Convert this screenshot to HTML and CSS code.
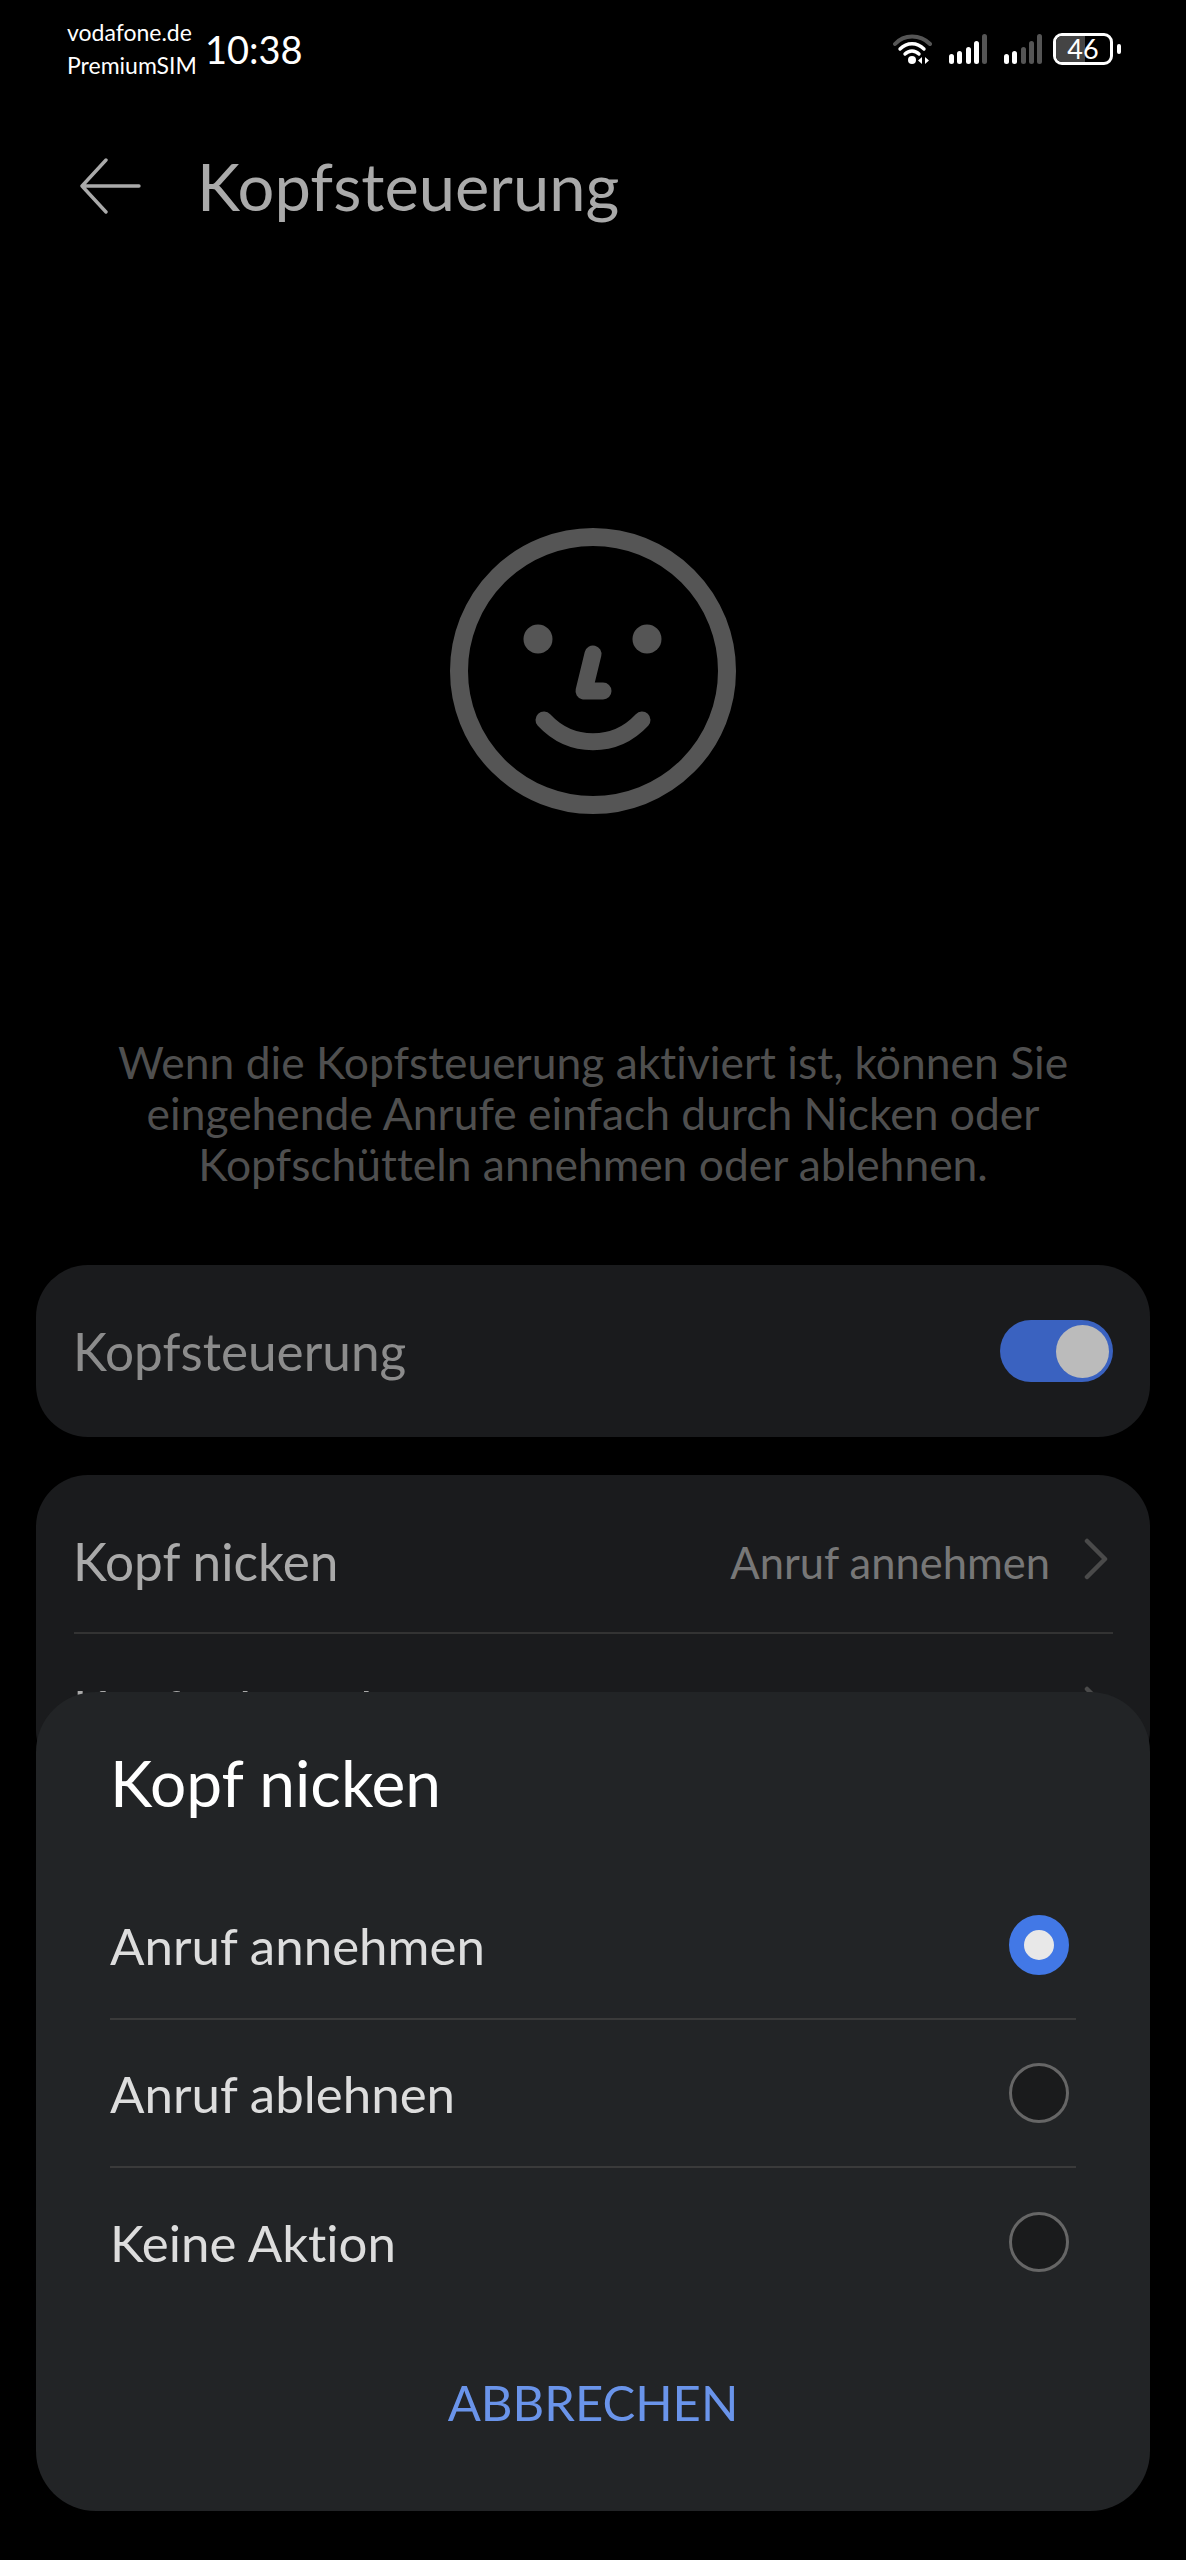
FILE: index.html
```html
<!DOCTYPE html>
<html lang="de">

<head>
    <meta charset="UTF-8">
    <title>Kopfsteuerung</title>
    <link rel="stylesheet" href="styles.css">
</head>

<body>
    <div class="screen">
        <div class="status-bar">
            <div class="carrier">
                <div>vodafone.de</div>
                <div>PremiumSIM</div>
            </div>
            <div class="clock">10:38</div>
            <div class="status-icons">
                <svg class="wifi" width="40" height="32" viewBox="0 0 40 32">
                    <path d="M2 11C11 1 27 1 37 11" fill="none" stroke="#555" stroke-width="4" stroke-linecap="round"/>
                    <path d="M7 16C14 9 24 9 31 16" fill="none" stroke="#fff" stroke-width="3.4" stroke-linecap="round"/>
                    <path d="M12 21C16 17 22 17 26 21" fill="none" stroke="#fff" stroke-width="3.4" stroke-linecap="round"/>
                    <circle cx="19" cy="27" r="4" fill="#fff"/>
                    <path d="M29 24v7l-4-3.5zM32 24v7l4-3.5z" fill="#fff"/>
                </svg>
                <svg class="signal" width="39" height="32" viewBox="0 0 39 32">
                    <rect x="0" y="21" width="5" height="10" rx="2.5" fill="#fff"/>
                    <rect x="8" y="18" width="5" height="13" rx="2.5" fill="#fff"/>
                    <rect x="17" y="14" width="5" height="17" rx="2.5" fill="#fff"/>
                    <rect x="25" y="8" width="5" height="23" rx="2.5" fill="#fff"/>
                    <rect x="33" y="1" width="5" height="30" rx="2.5" fill="#555"/>
                </svg>
                <svg class="signal" width="39" height="32" viewBox="0 0 39 32">
                    <rect x="0" y="21" width="5" height="10" rx="2.5" fill="#fff"/>
                    <rect x="8" y="18" width="5" height="13" rx="2.5" fill="#fff"/>
                    <rect x="17" y="14" width="5" height="17" rx="2.5" fill="#555"/>
                    <rect x="25" y="8" width="5" height="23" rx="2.5" fill="#555"/>
                    <rect x="33" y="1" width="5" height="30" rx="2.5" fill="#555"/>
                </svg>
                <div class="battery"><span class="battery-level"></span><span class="battery-text">46</span></div>
                <span class="battery-cap"></span>
            </div>
        </div>

        <div class="title-bar">
            <svg class="back" width="62" height="56" viewBox="0 0 62 56">
                <path d="M60 28H3M27 2L3 28l24 26" fill="none" stroke="#aaa" stroke-width="3.4" stroke-linecap="round" stroke-linejoin="round"/>
            </svg>
            <h1>Kopfsteuerung</h1>
        </div>

        <div class="face">
            <svg width="288" height="288" viewBox="0 0 288 288">
                <circle cx="144" cy="144" r="134" fill="none" stroke="#555" stroke-width="18"/>
                <circle cx="89" cy="112" r="14.5" fill="#555"/>
                <circle cx="198" cy="112" r="14.5" fill="#555"/>
                <path d="M144 127L135 164H154" fill="none" stroke="#555" stroke-width="17" stroke-linecap="round" stroke-linejoin="round"/>
                <path d="M95 193C122 222 166 222 193 193" fill="none" stroke="#555" stroke-width="17" stroke-linecap="round"/>
            </svg>
        </div>

        <p class="intro">Wenn die Kopfsteuerung aktiviert ist, können Sie eingehende Anrufe einfach durch Nicken oder Kopfschütteln annehmen oder ablehnen.</p>

        <div class="card switch-card">
            <span class="switch-label">Kopfsteuerung</span>
            <div class="toggle"><span class="knob"></span></div>
        </div>

        <div class="card list-card">
            <div class="list-row">
                <span class="row-label">Kopf nicken</span>
                <span class="row-value">Anruf annehmen</span>
                <svg class="chevron" width="24" height="42" viewBox="0 0 24 42"><path d="M3 3l18 18L3 39" fill="none" stroke="#4a4a4a" stroke-width="4.5" stroke-linecap="round" stroke-linejoin="round"/></svg>
            </div>
            <div class="list-row">
                <span class="row-label">Kopf schütteln</span>
                <span class="row-value">Anruf ablehnen</span>
                <svg class="chevron" width="24" height="42" viewBox="0 0 24 42"><path d="M3 3l18 18L3 39" fill="none" stroke="#4a4a4a" stroke-width="4.5" stroke-linecap="round" stroke-linejoin="round"/></svg>
            </div>
        </div>

        <div class="sheet">
            <h2>Kopf nicken</h2>
            <div class="option">
                <span>Anruf annehmen</span>
                <span class="radio radio-on"></span>
            </div>
            <div class="option">
                <span>Anruf ablehnen</span>
                <span class="radio"></span>
            </div>
            <div class="option">
                <span>Keine Aktion</span>
                <span class="radio"></span>
            </div>
            <div class="cancel">ABBRECHEN</div>
        </div>
    </div>
</body>
</html>
```

FILE: styles.css
```css
* {
    box-sizing: border-box;
}

body {
    margin: 0;
    background-color: #000;
    font-family: 'Lato', 'Noto Sans', sans-serif;
    font-variant-ligatures: none;
}

.screen {
    position: relative;
    width: 1186px;
    height: 2560px;
    overflow: hidden;
    background-color: #000;
}

/* status bar */
.status-bar {
    display: flex;
    align-items: center;
    height: 98px;
    padding: 0 65px 0 67px;
    color: #fff;
}

.carrier {
    font-size: 23px;
    line-height: 33px;
}

.clock {
    margin-left: 8px;
    font-size: 38px;
}

.status-icons {
    display: flex;
    align-items: center;
    gap: 16px;
    margin-left: auto;
}

.battery {
    position: relative;
    width: 60px;
    height: 32px;
    margin-left: -6px;
    border: 3px solid #fff;
    border-radius: 9px;
    text-align: center;
    font-size: 27px;
    line-height: 26px;
}

.battery-level {
    position: absolute;
    left: 0;
    top: 0;
    bottom: 0;
    width: 54%;
    border-radius: 6px 0 0 6px;
    background-color: #444;
}

.battery-text {
    position: relative;
}

.battery-cap {
    width: 4px;
    height: 10px;
    margin-left: -12px;
    border-radius: 2px;
    background-color: #fff;
}

/* title */
.title-bar {
    display: flex;
    align-items: center;
    height: 92px;
    padding-left: 79px;
    margin-top: 42px;
}

.title-bar h1 {
    margin: 0 0 0 56px;
    font-size: 65px;
    font-weight: 400;
    color: #aaa;
}

.face {
    display: flex;
    justify-content: center;
    margin-top: 295px;
}

.intro {
    margin: 221px 100px 0;
    font-size: 44.4px;
    line-height: 51px;
    text-align: center;
    color: #4f4f4f;
}

/* cards */
.card {
    margin: 0 36px;
    border-radius: 52px;
    background-color: #1a1b1d;
}

.switch-card {
    display: flex;
    align-items: center;
    justify-content: space-between;
    height: 172px;
    margin-top: 76px;
    padding: 0 37px;
}

.switch-label {
    font-size: 51.3px;
    color: #8c8c8c;
}

.toggle {
    display: flex;
    justify-content: flex-end;
    align-items: center;
    width: 113px;
    height: 62px;
    padding-right: 4px;
    border-radius: 31px;
    background-color: #3a62c0;
}

.knob {
    width: 53px;
    height: 53px;
    border-radius: 50%;
    background-color: #bbb;
}

.list-card {
    margin-top: 38px;
    padding: 11px 37px 0 38px;
}

.list-row {
    display: flex;
    align-items: center;
    height: 148px;
    border-bottom: 2px solid #333;
}

.row-label {
    margin-left: -1px;
    padding-top: 3px;
    font-size: 51.3px;
    color: #aaa;
}

.row-value {
    margin-left: auto;
    margin-right: 34px;
    padding-top: 6px;
    font-size: 43.5px;
    color: #777;
}

.chevron {
    margin-right: 5px;
}

/* bottom sheet */
.sheet {
    position: absolute;
    left: 36px;
    right: 36px;
    top: 1692px;
    height: 819px;
    padding: 0 74px;
    border-radius: 60px;
    background-color: #222426;
}

.sheet h2 {
    margin: 0;
    padding-top: 52px;
    height: 180px;
    font-size: 64px;
    font-weight: 400;
    color: #fff;
}

.option {
    display: flex;
    align-items: center;
    justify-content: space-between;
    height: 148px;
    padding-right: 7px;
    font-size: 51px;
    color: #ddd;
    border-bottom: 2px solid #3a3a3a;
}

.option:nth-of-type(3) {
    border-bottom: none;
}

.radio {
    width: 60px;
    height: 60px;
    border: 3px solid #666;
    border-radius: 50%;
    background-color: #1a1b1c;
}

.radio-on {
    border: 15px solid #4278e6;
    background-color: #e8e8e8;
}

.cancel {
    margin-top: 57px;
    text-align: center;
    font-size: 49px;
    color: #6a94ea;
}
```
